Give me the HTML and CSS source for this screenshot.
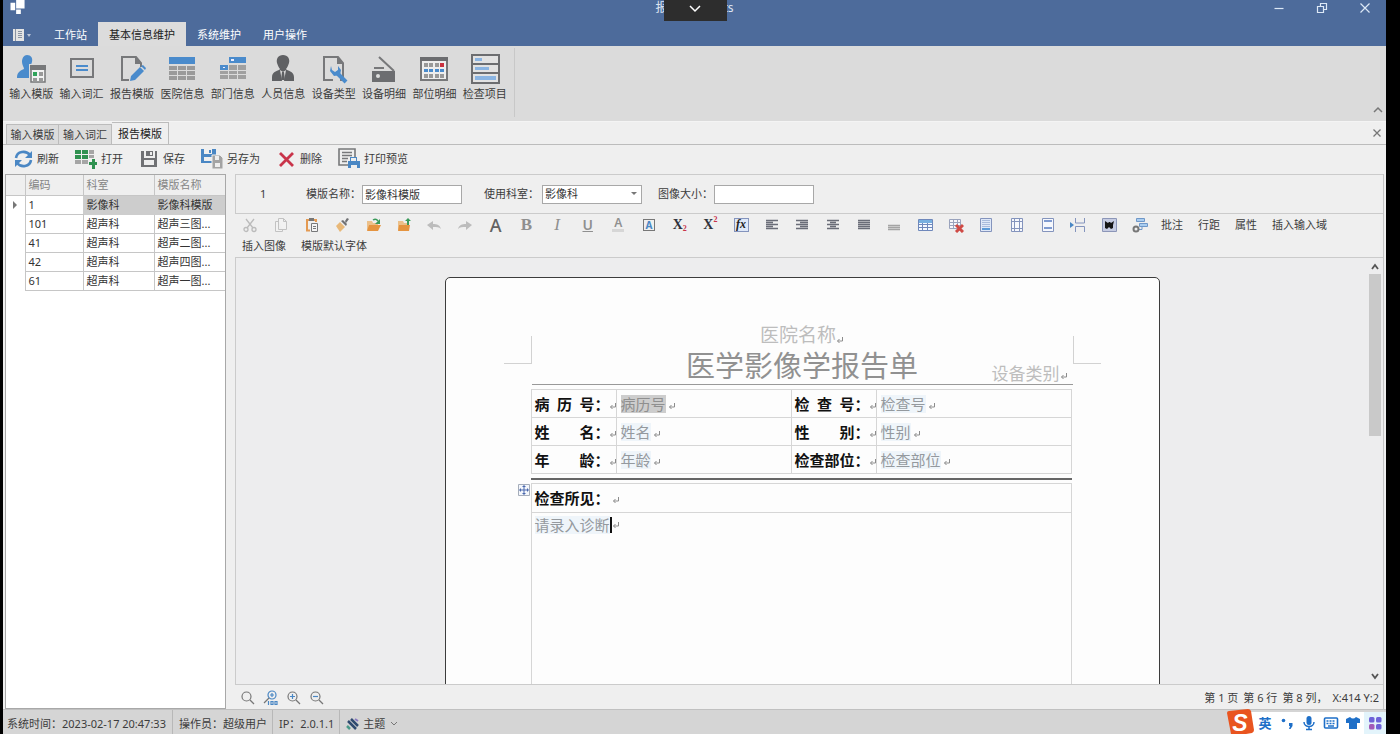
FILE: index.html
```html
<!DOCTYPE html>
<html lang="zh-CN">
<head>
<meta charset="utf-8">
<title>报告模版</title>
<link rel="stylesheet" href="styles.css">
</head>
<body>
<svg class="defs" aria-hidden="true">
  <symbol id="ret" viewBox="0 0 8 8"><path d="M6.500 1v4H1.500M3.500 3L1.500 5l2 2" fill="none" stroke="currentColor"/></symbol>
</svg>
<div class="app">
  <header class="titlebar">
    <svg class="app-logo" viewBox="0 0 16 16"><path fill="#fff" d="M6 0h9v9H6zM0 3h5v8H0zM6 10h5v5H6z"/></svg>
    <div class="title"><span>报</span><span>ts</span>
      <button class="pull" aria-label="展开"><svg viewBox="0 0 12 8"><path d="M1 1l5 5 5-5" fill="none" stroke="#fff" stroke-width="1.500"/></svg></button>
    </div>
    <div class="win-buttons">
      <button aria-label="最小化"><svg viewBox="0 0 12 12"><path d="M1.500 6.500h9"/></svg></button>
      <button aria-label="还原"><svg viewBox="0 0 12 12"><path d="M1.500 4.500h6v6h-6zM4.500 4V1.500h6v6H8"/></svg></button>
      <button aria-label="关闭"><svg viewBox="0 0 12 12"><path d="M1.500 1.500l9 9M10.500 1.500l-9 9"/></svg></button>
    </div>
  </header>
  <nav class="menu">
    <button class="file" aria-label="文件"><svg viewBox="0 0 18 12"><path fill="#e4e4e4" d="M0 0h11v12H0z"/><path stroke="#8a94a4" d="M2.500 0v12M5 2.500h4M5 4.500h4M5 6.500h4M5 8.500h4"/><path fill="#b9c4d8" d="M14 5h4l-2 3z"/></svg></button>
    <button>工作站</button>
    <button class="on">基本信息维护</button>
    <button>系统维护</button>
    <button>用户操作</button>
  </nav>
  <section class="ribbon">
    <div class="ribbon-group">
      <button><svg viewBox="0 0 30 30"><path fill="#4a8bcc" d="M11 1c4 0 6 3 5 7-1 3-2 5-2 7l2 1v8H1c0-5 2-7 7-9 0-2-2-4-2-7 0-4 2-7 5-7z"/><path fill="#dcdcdc" d="M13 10h17v20H13z"/><path fill="#f2f2f2" stroke="#77787a" stroke-width="1.500" d="M15 12h14v16H15z"/><path fill="#77787a" d="M14 11h16v5H14z"/><path fill="#2fa35a" d="M17 18h4v4h-4z"/><path fill="#999" d="M23 18h4v4h-4zM17 24h4v3h-4zM23 24h4v3h-4z"/></svg><span>输入模版</span></button>
      <button><svg viewBox="0 0 30 30"><path fill="none" stroke="#77787a" stroke-width="2" d="M4 5h22v18H4z"/><path stroke="#4a8bcc" stroke-width="2" d="M9 12h12M9 16h12"/></svg><span>输入词汇</span></button>
      <button><svg viewBox="0 0 30 30"><path fill="none" stroke="#77787a" stroke-width="2" d="M12 26H5V3h14l5 6v4"/><path fill="#77787a" d="M18 2v8h7z"/><path fill="#4a8bcc" d="M14 22L23 13l4 4-9 9-5 1zM24 12l2-1 3 3-1 2z"/></svg><span>报告模版</span></button>
      <button><svg viewBox="0 0 30 30"><path fill="#4a8bcc" d="M2 3h26v7H2z"/><path fill="#9a9a9a" d="M2 12h8v4H2zM11 12h8v4h-8zM20 12h8v4h-8zM2 17h8v4H2zM11 17h8v4h-8zM20 17h8v4h-8zM2 22h8v4H2zM11 22h8v4h-8zM20 22h8v4h-8z"/></svg><span>医院信息</span></button>
      <button><svg viewBox="0 0 30 30"><path fill="#4a8bcc" d="M11 3h17v6H11zM2 11h8v5H2z"/><path fill="#eef" d="M13 5h3v2h-3zM5 13h2v1H5z"/><path fill="#a0a0a0" d="M11 11h8v5h-8zM20 11h8v5h-8zM2 17h8v3H2zM11 17h8v3h-8zM20 17h8v3h-8zM2 21h8v4H2zM11 21h8v4h-8zM20 21h8v4h-8z"/></svg><span>部门信息</span></button>
      <button><svg viewBox="0 0 30 30"><path fill="#5f6063" d="M15 1c5 0 7 4 6 8-1 3-2 5-3 6 1 2 8 2 8 8v4H4v-4c0-6 7-6 8-8-1-1-2-3-3-6-1-4 1-8 6-8z"/><path fill="#dcdcdc" d="M12 16l3 2 3-2-2 11h-2z"/><path fill="#5f6063" d="M14 18h2l1 8h-4z"/></svg><span>人员信息</span></button>
      <button><svg viewBox="0 0 30 30"><path fill="none" stroke="#77787a" stroke-width="2" d="M14 26H5V3h14l5 6v17h-3"/><path fill="#77787a" d="M18 2v8h7z"/><path stroke="#4a8bcc" stroke-width="4" d="M17 18l10 10"/><path fill="#4a8bcc" d="M12 12l-1 5 4 5 6-1 1-5-3-4v4l-3 2-3-2z"/></svg><span>设备类型</span></button>
      <button><svg viewBox="0 0 30 30"><path fill="#6c6d70" d="M3 17h23v11H3z"/><path stroke="#77787a" stroke-width="2" d="M5 14h10M10 3l15 14"/><circle cx="9" cy="22" r="2" fill="#ddd"/></svg><span>设备明细</span></button>
      <button><svg viewBox="0 0 30 30"><path fill="#eee" stroke="#77787a" stroke-width="2" d="M2 4h26v22H2z"/><path fill="#6c6d70" d="M1 3h28v4H1z"/><path fill="#999" d="M5 9h4v4H5zM10 9h4v4h-4zM16 9h4v4h-4zM5 20h4v4H5zM10 20h4v4h-4zM16 20h4v4h-4zM21 20h4v4h-4z"/><path fill="#4a8bcc" d="M5 15h4v3H5zM10 15h4v3h-4zM16 15h4v3h-4zM21 15h4v3h-4z"/><path fill="#c9303e" d="M21 9h4v4h-4z"/></svg><span>部位明细</span></button>
      <button><svg viewBox="0 0 30 30"><path fill="#e2e2e2" stroke="#6c6d70" stroke-width="2" d="M2 1h27v28H2zM2 10h27M2 19h27"/><path fill="#8ab4e2" d="M5 4h7v3H5zM5 13h14v3H5zM5 22h21v4H5z"/></svg><span>检查项目</span></button>
    </div>
    <button class="collapse" aria-label="折叠功能区"><svg viewBox="0 0 10 8"><path d="M1 6l4-4 4 4" fill="none" stroke="#777" stroke-width="1.500"/></svg></button>
  </section>
  <div class="doctabs">
    <button>输入模版</button><button>输入词汇</button><button class="on">报告模版</button>
    <button class="close" aria-label="关闭标签"><svg viewBox="0 0 10 10"><path d="M1.500 1.500l7 7M8.500 1.500l-7 7" stroke="#777" stroke-width="1.300"/></svg></button>
  </div>
  <div class="actions">
    <button><svg class="i19" viewBox="0 0 19 20"><g fill="none" stroke="#4a87c4" stroke-width="2.600"><path d="M2 9c1-7 10-8 14-3M17 11c-1 7-10 8-14 3"/></g><path fill="#4a87c4" d="M18 2v7h-7zM1 18v-7h7z"/></svg>刷新</button>
    <button><svg class="i22" viewBox="0 0 22 20"><path fill="#2f9150" d="M0 1h6v4H0zM7 1h6v4H7zM0 6h6v4H0zM14 13h3v-3h3v3h3v3h-3v4h-3v-4h-3z"/><path fill="#2f9150" d="M7 6h6v4H7z"/><path fill="#a5a5a5" d="M14 1h5v4h-5zM14 6h5v3h-5zM0 11h6v4H0zM7 11h6v4H7z"/></svg>打开</button>
    <button><svg class="i20" viewBox="0 0 20 20"><path fill="#707174" d="M2 2h3v7h11V2h2v16H2zM7 2h7v5H7z"/><path fill="#eee" d="M5 11h10v5H5zM11 3h2v3h-2z"/></svg>保存</button>
    <button><svg class="i22" viewBox="0 0 22 20"><path fill="#4a87c4" d="M0 0h15v14H0z"/><path fill="#efefef" d="M3 0h8v5H3zM3 8h8v4H3z"/><path fill="#4a87c4" d="M8 1h2v3H8z"/><path fill="#a3a3a3" stroke="#eee" d="M11 6h8l3 3v11H11z"/><path fill="#eee" d="M14 7h4v4h-4zM14 14h5v4h-5z"/></svg>另存为</button>
    <button><svg class="i20" viewBox="0 0 20 20"><path d="M4 4l13 13M17 4L4 17" stroke="#c9344a" stroke-width="2.800"/></svg>删除</button>
    <button><svg class="i22" viewBox="0 0 22 22"><path fill="none" stroke="#77787a" stroke-width="1.600" d="M10 17H1V1h16v8"/><path stroke="#77787a" stroke-width="1.300" d="M4 4.500h10M4 7.500h10M4 10.500h6M4 13.500h5"/><path fill="#4a87c4" d="M12 9h7v4h3v7H10v-7h2z"/><path fill="#eee" d="M13 10h5v3h-5zM13 17h6v4h-6z"/></svg>打印预览</button>
  </div>
  <main class="work">
    <aside class="list">
      <table>
        <colgroup><col class="c0"><col class="c1"><col class="c2"><col class="c2"></colgroup>
        <thead><tr><th></th><th>编码</th><th>科室</th><th>模版名称</th></tr></thead>
        <tbody>
          <tr class="sel"><td><svg class="row-mark" viewBox="0 0 5 8"><path d="M1 0l4 4-4 4z" fill="#777"/></svg></td><td>1</td><td>影像科</td><td>影像科模版</td></tr>
          <tr><td></td><td>101</td><td>超声科</td><td>超声三图...</td></tr>
          <tr><td></td><td>41</td><td>超声科</td><td>超声二图...</td></tr>
          <tr><td></td><td>42</td><td>超声科</td><td>超声四图...</td></tr>
          <tr><td></td><td>61</td><td>超声科</td><td>超声一图...</td></tr>
        </tbody>
      </table>
    </aside>
    <section class="editor">
      <form class="props">
        <span class="num">1</span>
        <div class="field"><label for="name">模版名称：</label><input id="name" type="text" value="影像科模版"></div>
        <div class="field dept"><label for="dept">使用科室：</label><span class="pick"><select id="dept"><option>影像科</option></select><svg viewBox="0 0 6 4"><path d="M0 0h6L3 3z" fill="#777"/></svg></span></div>
        <div class="field"><label for="size">图像大小：</label><input id="size" type="text"></div>
      </form>
      <div class="tools">
        <div class="icons">
          <button aria-label="剪切"><svg viewBox="0 0 16 16"><path d="M4 2l7 9M12 2l-7 9" fill="none" stroke="#bbb" stroke-width="1.300"/><g fill="none" stroke="#bbb" stroke-width="1.300"><circle cx="4" cy="12.500" r="2"/><circle cx="12" cy="12.500" r="2"/></g></svg></button>
          <button aria-label="复制"><svg viewBox="0 0 16 16"><path fill="#f2f2f2" stroke="#c2c2c2" d="M5.500 1.500h5l3 3v8h-8zM10.500 1.500v3h3M5.500 4.500h-3v10h7v-2"/></svg></button>
          <button aria-label="粘贴"><svg viewBox="0 0 16 16"><path fill="none" stroke="#e49a52" stroke-width="2" d="M6 13.500H3V3h9v2"/><path fill="#777" d="M5 1h5v3H5z"/><path fill="#f4f4f4" stroke="#77787a" d="M7.500 6.500h6v8h-6zM9 9.500h3M9 11.500h3"/></svg></button>
          <button aria-label="格式刷"><svg viewBox="0 0 16 16"><path fill="#e8b878" d="M2 9l4-4 5 5-5 5z"/><path fill="#707174" d="M7 4l2-1 4 4-1 2zM11 4l2-3 2 1-3 4z"/></svg></button>
          <button aria-label="打开"><svg viewBox="0 0 16 16"><path fill="#ecc08a" d="M2 4h5l1 2h5v7H2z"/><path fill="#e59440" d="M4 8h12l-3 6H2z"/><path fill="none" stroke="#3a9a5a" stroke-width="1.500" d="M8 3q3-2 5 1"/><path fill="#3a9a5a" d="M15 2v5h-5z"/></svg></button>
          <button aria-label="导出"><svg viewBox="0 0 16 16"><path fill="#ecc08a" d="M2 4h5l1 2h5v7H2z"/><path fill="#e59440" d="M3 8h11l-1 6H2z"/><path fill="#3a9a5a" d="M12 1l3 3h-2v4h-2V4H9z"/></svg></button>
          <button aria-label="撤销"><svg viewBox="0 0 16 16"><path fill="#bcbcbc" d="M1 8l6-4v3c4 0 7 1 8 5-2-2-4-2-8-2v3z"/></svg></button>
          <button aria-label="重做"><svg viewBox="0 0 16 16"><path fill="#bcbcbc" d="M15 8L9 4v3c-4 0-7 1-8 5 2-2 4-2 8-2v3z"/></svg></button>
          <button class="glyph a" aria-label="字体">A</button>
          <button class="glyph b" aria-label="加粗">B</button>
          <button class="glyph i" aria-label="斜体">I</button>
          <button class="glyph u" aria-label="下划线">U</button>
          <button class="glyph color" aria-label="文字颜色"><span>A</span></button>
          <button class="glyph box" aria-label="底纹"><span>A</span></button>
          <button class="glyph x" aria-label="下标">X<sub>2</sub></button>
          <button class="glyph x" aria-label="上标">X<sup>2</sup></button>
          <button class="glyph fx" aria-label="公式"><span>fx</span></button>
          <button aria-label="左对齐"><svg class="al" viewBox="0 0 16 16"><path d="M2 3.500h12M2 5.500h7M2 7.500h12M2 9.500h7M2 11.500h12"/></svg></button>
          <button aria-label="右对齐"><svg class="al" viewBox="0 0 16 16"><path d="M2 3.500h12M6 5.500h8M2 7.500h12M6 9.500h8M2 11.500h12"/></svg></button>
          <button aria-label="居中"><svg class="al" viewBox="0 0 16 16"><path d="M2 3.500h12M5 5.500h6M2 7.500h12M5 9.500h6M2 11.500h12"/></svg></button>
          <button aria-label="两端对齐"><svg class="al" viewBox="0 0 16 16"><path d="M2 3.500h12M2 5.500h12M2 7.500h12M2 9.500h12M2 11.500h12"/></svg></button>
          <button aria-label="横线"><svg viewBox="0 0 16 16"><path stroke="#a4a4a4" stroke-width="1.400" d="M2 8.500h12M2 10.500h12M2 12.500h12"/></svg></button>
          <button aria-label="插入表格"><svg viewBox="0 0 16 16"><path fill="#f4f8ff" stroke="#6f88bb" d="M1.500 2.500h14v11h-14zM1.500 7.500h14M1.500 10.500h14M5.500 3v10M10.500 3v10"/><path fill="#77afe0" d="M2 3h13v3H2z"/></svg></button>
          <button aria-label="删除表格"><svg viewBox="0 0 16 16"><path fill="#f6f6fa" stroke="#9aa3bd" d="M1.500 2.500h11v9h-11zM1.500 5.500h11M1.500 8.500h11M5.500 3v8M9.500 3v8"/><path fill="none" stroke="#cf4a45" stroke-width="3" d="M8 8l7 7M15 8l-7 7"/></svg></button>
          <button aria-label="页脚"><svg viewBox="0 0 16 16"><path fill="#dfe8f8" stroke="#8494bd" d="M2.500 1.500h11v13h-11z"/><path stroke="#a9bbdc" d="M4 3.500h8M4 5.500h8M4 7.500h8M4 9.500h8"/><path fill="#5c9ad8" d="M4 11h8v2H4z"/></svg></button>
          <button aria-label="页边距"><svg viewBox="0 0 16 16"><path fill="#f6f8fd" stroke="#8494bd" d="M2.500 1.500h11v13h-11zM5.500 2v12M10.500 2v12M3 4.500h10M3 11.500h10"/></svg></button>
          <button aria-label="页眉页脚"><svg viewBox="0 0 16 16"><path fill="#f6f8fd" stroke="#8494bd" d="M2.500 1.500h11v13h-11z"/><path stroke="#7f9bd0" stroke-width="2" d="M4 4h8M4 11h8"/></svg></button>
          <button aria-label="分页符"><svg viewBox="0 0 16 16"><path fill="none" stroke="#8494bd" d="M5.500 1v5h9V1M5.500 15V9.500h9V15"/><path fill="#4a87c4" d="M0 5l4 3-4 3z"/></svg></button>
          <button aria-label="水印"><svg viewBox="0 0 16 16"><path fill="#c6cce2" stroke="#8c96b8" d="M1.500 1.500h14v13h-14z"/><path fill="#151515" d="M4 4l3 2 1-1 1 0 1 1 3-2-1 4v3l-2 1-2-2-2 2-2-1V8z"/></svg></button>
          <button aria-label="域"><svg viewBox="0 0 16 16"><path fill="#a9cdf0" stroke="#6f97c8" d="M4.500 1.500h8v3h-8zM7.500 6.500h8v3h-8z"/><path stroke="#6f97c8" fill="none" d="M6 12.500h4V10"/><circle cx="4" cy="12" r="2.500" fill="none" stroke="#777" stroke-width="2"/></svg></button>
        </div>
        <button>批注</button><button>行距</button><button>属性</button><button>插入输入域</button>
        <span class="break"></span>
        <button>插入图像</button><button>模版默认字体</button>
      </div>
      <div class="canvas">
        <div class="view">
          <article class="page">
            <header class="page-head">
              <i class="corner left"></i>
              <div class="head-text">
                <p class="hospital">医院名称<svg class="ret"><use href="#ret"/></svg></p>
                <div class="head-line"><h1>医学影像学报告单</h1><p class="device">设备类别<svg class="ret"><use href="#ret"/></svg></p></div>
              </div>
              <i class="corner right"></i>
            </header>
            <div class="page-body">
              <table class="info">
                <colgroup><col class="k"><col class="v"><col class="k"><col></colgroup>
                <tr><th><span class="lab">病 历 号</span>：<svg class="ret"><use href="#ret"/></svg></th><td><mark class="cur">病历号</mark><svg class="ret"><use href="#ret"/></svg></td><th><span class="lab">检 查 号</span>：<svg class="ret"><use href="#ret"/></svg></th><td><mark>检查号</mark><svg class="ret"><use href="#ret"/></svg></td></tr>
                <tr><th><span class="lab">姓 名</span>：<svg class="ret"><use href="#ret"/></svg></th><td><mark>姓名</mark><svg class="ret"><use href="#ret"/></svg></td><th><span class="lab">性 别</span>：<svg class="ret"><use href="#ret"/></svg></th><td><mark>性别</mark><svg class="ret"><use href="#ret"/></svg></td></tr>
                <tr><th><span class="lab">年 龄</span>：<svg class="ret"><use href="#ret"/></svg></th><td><mark>年龄</mark><svg class="ret"><use href="#ret"/></svg></td><th><span class="lab">检查部位</span>：<svg class="ret"><use href="#ret"/></svg></th><td><mark>检查部位</mark><svg class="ret"><use href="#ret"/></svg></td></tr>
              </table>
              <hr>
              <div class="findings">
                <svg class="handle" viewBox="0 0 12 12"><path fill="#f4f7fc" stroke="#a5adba" d="M.5.5h11v11H.5z"/><path stroke="#4a68ad" d="M6 2v8M2 6h8"/><path fill="#4a68ad" d="M6 1l2 2H4zM6 11l2-2H4zM1 6l2-2v4zM11 6L9 4v4z"/></svg>
                <h2><span class="lab">检查所见</span>：<svg class="ret"><use href="#ret"/></svg></h2>
                <p><mark>请录入诊断</mark><span class="caret"></span><svg class="ret"><use href="#ret"/></svg></p>
              </div>
            </div>
          </article>
        </div>
        <div class="scroll">
          <svg viewBox="0 0 12 10"><path d="M3 7l3-4 3 4" fill="none" stroke="#555" stroke-width="1.800"/></svg>
          <div class="thumb"></div>
          <svg viewBox="0 0 12 10"><path d="M3 3l3 4 3-4" fill="none" stroke="#555" stroke-width="1.800"/></svg>
        </div>
      </div>
      <footer class="zoombar">
        <button aria-label="缩放"><svg viewBox="0 0 16 16"><circle cx="6.500" cy="6.500" r="4.500"/><path d="M10 10l4 4"/></svg></button>
        <button aria-label="100%"><svg viewBox="0 0 16 16"><g stroke="#4a87c4"><circle cx="9" cy="5" r="4"/><path d="M7 5h4M9 3v4"/></g><path d="M6 8l-5 5"/><path stroke="#4a87c4" d="M5.500 11v4M8 11.500h2v3H8zM12 11.500h2v3h-2z"/></svg></button>
        <button aria-label="放大"><svg viewBox="0 0 16 16"><circle cx="6.500" cy="6.500" r="4.500"/><path d="M10 10l4 4"/><path stroke="#4a87c4" d="M4 6.500h5M6.500 4v5"/></svg></button>
        <button aria-label="缩小"><svg viewBox="0 0 16 16"><circle cx="6.500" cy="6.500" r="4.500"/><path d="M10 10l4 4"/><path stroke="#4a87c4" d="M4 6.500h5"/></svg></button>
        <span class="pos"><span>第 1 页</span> <span>第 6 行</span> <span>第 8 列，</span> <span>X:414 Y:2</span></span>
      </footer>
    </section>
  </main>
  <footer class="status">
    <span>系统时间：2023-02-17 20:47:33</span>
    <span>操作员：超级用户</span>
    <span>IP：2.0.1.1</span>
    <button class="theme"><svg viewBox="0 0 14 14"><path d="M2 4l8 8M5 2l7 7" stroke="#2f4a70" stroke-width="2.500"/><path d="M1 9l3 3" stroke="#4a9a8a" stroke-width="2.500"/><path d="M9 2l3 2" stroke="#8a7ac0" stroke-width="2"/></svg>主题<svg class="chev" viewBox="0 0 8 6"><path d="M1 1l3 3 3-3" fill="none" stroke="#777"/></svg></button>
    <div class="ime">
      <svg class="sogou" viewBox="0 0 28 26"><path fill="#e9541f" d="M1 4q0-2 2-2L22 0q2 0 3 2l3 19q0 2-2 3L8 27q-3 0-3-2z"/><text x="14" y="22" text-anchor="middle">S</text></svg>
      <button class="lang">英</button>
      <button aria-label="标点"><svg viewBox="0 0 16 16"><circle cx="4.500" cy="5.500" r="1.800" fill="#1e6fc8"/><path fill="#1e6fc8" d="M10 8h3.500v3l-2 3H10l1-3h-1z"/></svg></button>
      <button aria-label="语音"><svg viewBox="0 0 16 16"><rect x="5.500" y="1" width="5" height="9" rx="2.500" fill="#1e6fc8"/><path fill="none" stroke="#1e6fc8" stroke-width="1.500" d="M3 7c0 6 10 6 10 0M8 12v3M5 14.500h6"/></svg></button>
      <button aria-label="软键盘"><svg viewBox="0 0 16 16"><rect x="1.500" y="3" width="13" height="10" rx="1" fill="#fff" stroke="#1e6fc8" stroke-width="1.600"/><path stroke="#1e6fc8" stroke-width="1.500" stroke-dasharray="2 1" d="M3.500 6h9M3.500 8.500h9"/><path stroke="#1e6fc8" stroke-width="1.500" d="M5 11h6"/></svg></button>
      <button aria-label="皮肤"><svg viewBox="0 0 16 16"><path fill="#1e6fc8" d="M5 2q3 3 6 0l4 2v4h-3v6H4V8H1V4z"/></svg></button>
      <button class="box4" aria-label="工具箱"><svg viewBox="0 0 16 16"><g fill="#6d63d8"><rect x="2" y="2" width="5.500" height="5.500" rx="1.500"/><rect x="9" y="2" width="5.500" height="5.500" rx="1.500"/><rect x="9" y="9" width="5.500" height="5.500" rx="1.500"/></g><rect x="2" y="9" width="5.500" height="5.500" rx="1.500" fill="#a25bb8"/></svg></button>
    </div>
  </footer>
</div>
</body>
</html>
```
FILE: styles.css
```css
* { box-sizing: border-box; }
body {
  margin: 0;
  background: #000;
  color: #3c3c3c;
  font: 11px/16px "Noto Sans", "Noto Sans CJK SC", sans-serif;
}
h1, h2, p { margin: 0; font-weight: 400; }
svg { display: block; flex: none; }
button {
  display: flex;
  align-items: center;
  justify-content: center;
  flex: none;
  margin: 0;
  padding: 0;
  border: 0;
  background: none;
  color: inherit;
  font: inherit;
  white-space: nowrap;
}
.defs { position: absolute; width: 0; height: 0; }
.app {
  display: flex;
  flex-direction: column;
  height: 100vh;
  margin: 0 14px 0 3px;
  background: #efefef;
  overflow: hidden;
}

/* title bar and menu */
.titlebar {
  display: grid;
  grid-template-columns: 1fr 78px 1fr;
  height: 22px;
  flex: none;
  background: #4d6b9b;
  color: #dde5f2;
}
.app-logo { width: 16px; height: 15px; margin-left: 7px; }
.title {
  position: relative;
  display: flex;
  justify-content: space-between;
  font-size: 12px;
}
.pull {
  position: absolute;
  top: 0;
  left: 8px;
  width: 63px;
  height: 21px;
  padding-bottom: 3px;
  background: #2d2d2d;
}
.pull svg { width: 12px; height: 8px; }
.win-buttons { display: flex; justify-content: flex-end; height: 16px; }
.win-buttons button { width: 43px; }
.win-buttons svg { width: 12px; height: 12px; fill: none; stroke: #dce8f6; stroke-width: 1.2; }
.menu {
  display: flex;
  height: 24px;
  flex: none;
  background: #4d6b9b;
  color: #fff;
}
.menu button { padding: 1px 11px 0; }
.menu .file { width: 40px; padding: 2px 12px 0 10px; }
.file svg { width: 18px; height: 12px; }
.menu .on { background: #dcdcdc; color: #222; }

/* ribbon */
.ribbon {
  display: flex;
  justify-content: space-between;
  height: 76px;
  flex: none;
  padding: 2px 2px 4px 3px;
  background: #dbdbdb;
  border-bottom: 1px solid #f4f4f4;
}
.ribbon-group { display: flex; width: 509px; padding-right: 4px; border-right: 1px solid #c8c8c8; }
.ribbon-group button { flex: 1; flex-direction: column; justify-content: flex-start; gap: 2px; padding-top: 6px; }
.ribbon-group svg { width: 30px; height: 30px; }
.collapse { align-self: flex-end; width: 12px; height: 14px; }
.collapse svg { width: 10px; height: 8px; }

/* document tabs */
.doctabs {
  display: flex;
  align-items: flex-end;
  height: 23px;
  flex: none;
  padding: 0 3px;
  border-bottom: 1px solid #bcbcbc;
}
.doctabs button { height: 20px; width: 53px; border: 1px solid #bcbcbc; border-bottom: 0; background: #dcdcdc; }
.doctabs button + button { border-left: 0; }
.doctabs .on { height: 22px; width: 57px; background: #efefef; color: #222; }
.doctabs .close { height: 22px; width: 12px; margin-left: auto; border: 0; background: none; }
.close svg { width: 10px; height: 10px; }

.actions { display: flex; gap: 16px; height: 29px; flex: none; padding: 0 11px 2px; }
.actions button { gap: 4px; }
.i19 { width: 19px; height: 20px; }
.i20 { width: 20px; height: 20px; }
.i22 { width: 22px; height: 22px; }

/* template list */
.work { display: flex; gap: 9px; flex: 1; min-height: 0; padding: 0 2px; }
.list { width: 221px; flex: none; background: #fff; border: 1px solid #a8a8a8; }
.list table { width: 100%; border-collapse: collapse; table-layout: fixed; }
.c0 { width: 19px; }
.c1 { width: 58px; }
.c2 { width: 71px; }
.list th, .list td {
  height: 19px;
  padding: 0 3px;
  border: 1px solid #c6c6c6;
  border-right: 0;
  text-align: left;
  line-height: 18px;
  white-space: nowrap;
}
.list th { height: 20px; border-top: 0; background: #efefef; color: #858585; font-weight: 400; }
.list td { color: #333; }
.list th:first-child, .list td:first-child { border-left: 0; }
.list td:first-child { border-top: 0; border-bottom: 0; }
.sel td:nth-child(n+3) { background: #cdcdcd; border-color: #cdcdcd; }
.row-mark { width: 5px; height: 8px; margin-left: 3px; }

/* editor */
.editor { display: flex; flex-direction: column; flex: 1; min-width: 0; border-right: 1px solid #c4c4c4; }
.props {
  display: flex;
  align-items: center;
  gap: 16px;
  height: 40px;
  flex: none;
  border: 1px solid #cbcbcb;
  border-right: 0;
}
.num { width: 54px; padding-left: 24px; }
.field { display: flex; align-items: center; gap: 1px; }
.dept { gap: 3px; padding-left: 6px; }
.props input, .props select {
  width: 100px;
  height: 19px;
  padding: 0 2px;
  border: 1px solid #a8a8a8;
  border-radius: 0;
  background: #fff;
  color: #333;
  font: inherit;
  appearance: none;
}
.pick { display: grid; align-items: center; }
.pick select, .pick svg { grid-area: 1 / 1; }
.pick svg { width: 6px; height: 4px; justify-self: end; margin-right: 5px; pointer-events: none; }
.tools { display: flex; flex-wrap: wrap; gap: 0 15px; padding: 0 7px 1px; }
.tools > button { height: 21px; }
.icons { display: flex; width: 920px; margin: 0 -9px 0 -7px; }
.icons button { flex: 1; height: 21px; }
.icons svg { width: 16px; height: 16px; }
.al { stroke: #6a6d78; stroke-width: 1.4; }
.break { flex-basis: 100%; height: 0; }
.glyph { color: #8f8f8f; font: 700 17px/18px "Liberation Serif", serif; }
.icons .a { color: #626262; font: 500 18px/18px "Noto Sans", sans-serif; }
.icons .b { font-weight: 700; }
.icons .i { font-style: italic; font-weight: 400; }
.icons .u { font: 600 14px/16px "Noto Sans", sans-serif; text-decoration: underline; }
.color span { height: 15px; border-bottom: 3px solid #d6d6d6; padding: 0 2px; font: 600 12px/12px "Noto Sans", sans-serif; }
.box span { width: 12px; height: 12px; border: 1px solid #777; color: #4a87c4; font: 700 10px/10px "Noto Sans", sans-serif; }
.icons .x { color: #30333c; font-size: 14px; }
.x sub, .x sup { color: #c9344a; font-size: 8px; line-height: 8px; }
.x sub { align-self: flex-end; padding-bottom: 2px; }
.x sup { align-self: flex-start; padding-top: 2px; }
.fx span { width: 15px; height: 14px; border: 1px solid #8494bd; background: #dfe8f8; color: #222; font: italic 700 12px/11px "Liberation Serif", serif; }

/* document canvas */
.canvas { display: flex; flex: 1; min-height: 0; border: 1px solid #cbcbcb; border-right: 0; background: #ededee; }
.view { flex: 1; min-width: 0; padding-top: 19px; overflow: hidden; }
.page {
  width: 715px;
  min-height: 1000px;
  margin: 0 auto;
  padding: 45px 58px 0;
  border: 1px solid #3c3c3c;
  border-radius: 5px;
  background: #fdfdfd;
}
.page-head { display: grid; grid-template-columns: 28px 1fr 28px; }
.corner { height: 28px; margin-top: 13px; border-bottom: 1px solid #d2d2d2; }
.corner.left { border-right: 1px solid #d2d2d2; }
.corner.right { border-left: 1px solid #d2d2d2; }
.head-text { border-bottom: 1px solid #999; }
.hospital {
  display: flex;
  justify-content: center;
  align-items: flex-end;
  color: #bdbdbd;
  font-size: 19px;
  line-height: 25px;
}
.head-line { display: grid; grid-template-columns: 1fr auto 1fr; align-items: end; height: 36px; }
.head-line h1 { grid-column: 2; color: #919191; font-size: 29px; line-height: 36px; }
.device { display: flex; align-items: flex-end; justify-content: flex-end; padding-right: 5px; color: #bdbdbd; font-size: 17px; line-height: 20px; }
.ret { display: inline-block; width: 8px; height: 8px; margin: 0 0 0 2px; color: #8c8c8c; }
.hospital .ret, .device .ret { margin: 0 0 4px; }
.page-body { margin: 4px 29px 0 27px; font-size: 15px; line-height: 26px; }
.info { width: 100%; border-collapse: collapse; table-layout: fixed; }
.k { width: 85px; }
.v { width: 175px; }
.info th, .info td { height: 28px; padding: 0 0 0 4px; border: 1px solid #d6d6d6; text-align: left; white-space: nowrap; }
.info th { padding-left: 3px; }
.info th, h2 { color: #111; font-weight: 700; font-size: 15px; }
.lab { display: inline-block; width: 60px; text-align: justify; text-align-last: justify; }
.info th .ret { margin-left: -1px; }
mark { display: inline-block; line-height: 18px; background: #eff5fa; color: #94999e; }
.cur { background: #cdcdcd; color: #8f8f8f; }
hr { height: 2px; margin: 4px 0 3px; border: 0; background: #666; }
.findings { position: relative; min-height: 600px; border: 1px solid #d6d6d6; }
.handle { position: absolute; left: -14px; top: 0; width: 12px; height: 12px; }
.findings h2 { padding-left: 3px; border-bottom: 1px solid #d6d6d6; line-height: 28px; }
.findings p { display: flex; align-items: center; padding: 3px 0 0 3px; line-height: 28px; }
.caret { width: 2px; height: 16px; background: #111; }
.findings p .ret { margin: 0; }
.scroll { display: flex; flex-direction: column; align-items: center; justify-content: space-between; width: 14px; margin-right: 1px; padding: 4px 0 3px; }
.scroll svg { width: 12px; height: 10px; }
.thumb { width: 12px; height: 162px; margin-top: 2px; margin-bottom: auto; background: #c9c9c9; }
.zoombar { display: flex; align-items: center; height: 24px; flex: none; padding: 2px 4px 0 1px; }
.zoombar button { width: 23px; }
.zoombar svg { width: 16px; height: 16px; fill: none; stroke: #777; stroke-width: 1.2; }
.pos { display: flex; gap: 5px; margin-left: auto; }

/* status bar */
.status {
  display: flex;
  align-items: stretch;
  height: 25px;
  flex: none;
  border-top: 1px solid #c0c0c0;
  background: #d5d5d5;
  line-height: 28px;
}
.status > span { padding: 0 5px 0 6px; border-right: 1px solid #b8b8b8; }
.status > span:first-child { padding: 0 6px 0 4px; }
.theme { gap: 3px; padding: 3px 6px 0; }
.theme svg { width: 14px; height: 14px; }
.theme .chev { width: 8px; height: 6px; margin-left: 2px; }
.ime { display: flex; align-items: center; margin: 2px 0 0 auto; background: #fff; }
.ime button { width: 22px; height: 22px; }
.ime button svg { width: 16px; height: 16px; }
.sogou { width: 28px; height: 26px; margin: -3px 0 0 -6px; }
.sogou text { fill: #fff; font: italic 700 23px "Liberation Sans", sans-serif; }
.ime .lang { width: 22px; color: #1e6fc8; font-size: 13px; font-weight: 700; }
.ime .box4 { background: #e3f4fb; }
```
